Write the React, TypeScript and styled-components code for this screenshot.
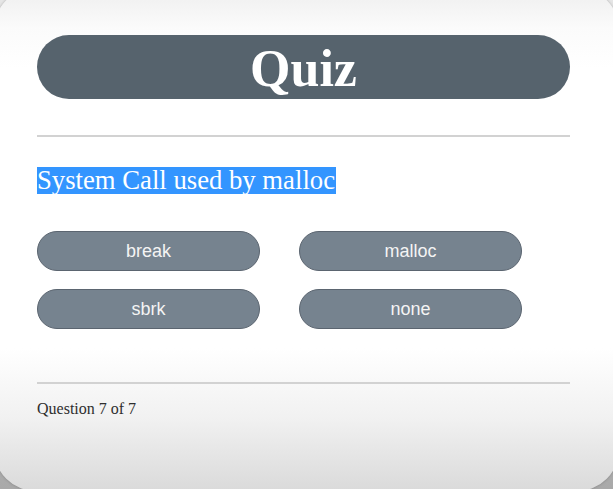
import styled, { createGlobalStyle } from "styled-components";

const GlobalStyle = createGlobalStyle`
  html, body {
    margin: 0;
    padding: 0;
    overflow: hidden;
    background: #b4b4b4;
  }
`;

const Page = styled.div`
  width: 613px;
  height: 489px;
  overflow: hidden;
  background: linear-gradient(#e6e6e6, #a9a9a9);
`;

const Card = styled.div`
  margin: -12px 0 0 -6px;
  width: 625px;
  height: 503px;
  box-sizing: border-box;
  padding: 47px 49px 0 43px;
  border-radius: 42px;
  background: linear-gradient(
    #eeeeee 0px,
    #fbfbfb 40px,
    #ffffff 80px,
    #ffffff 360px,
    #f1f1f1 430px,
    #dadada 503px
  );
  box-shadow: 0 0 3px rgba(0, 0, 0, 0.25);
  display: flex;
  flex-direction: column;
`;

const Header = styled.div`
  height: 64px;
  border-radius: 32px;
  background: #56636d;
  display: flex;
  align-items: center;
  justify-content: center;
`;

const Title = styled.h1`
  margin: 0;
  color: #ffffff;
  font-family: "Liberation Serif", "Times New Roman", serif;
  font-weight: bold;
  font-size: 52px;
  line-height: 1;
  transform: translateY(2px);
`;

const Divider = styled.hr<{ $top: number }>`
  margin: ${(p) => p.$top}px 0 0;
  border: none;
  height: 2px;
  background: #d2d2d2;
`;

const Question = styled.div`
  margin-top: 30px;
  font-family: "Liberation Serif", "Times New Roman", serif;
  font-size: 26.7px;
  line-height: 27px;
  height: 27px;
`;

const Highlight = styled.span`
  display: inline-block;
  background: #3395ff;
  color: #ffffff;
  line-height: 27px;
  height: 27px;
  padding-right: 1px;
`;

const Options = styled.div`
  margin-top: 37px;
  display: grid;
  grid-template-columns: 223px 223px;
  column-gap: 39px;
  row-gap: 18px;
`;

const Option = styled.button`
  height: 40px;
  border-radius: 20px;
  border: 1px solid #5b6570;
  background: #76838f;
  color: #f4f4f4;
  font-family: "Liberation Sans", Arial, sans-serif;
  font-size: 18px;
  padding: 0;
  cursor: pointer;
`;

const Counter = styled.div`
  margin-top: 16px;
  font-family: "Liberation Serif", "Times New Roman", serif;
  font-size: 16px;
  color: #2e2e2e;
`;

const options = ["break", "malloc", "sbrk", "none"];

const App = () => {
  return (
    <Page>
      <GlobalStyle />
      <Card>
        <Header>
          <Title>Quiz</Title>
        </Header>
        <Divider $top={36} />
        <Question>
          <Highlight>System Call used by malloc</Highlight>
        </Question>
        <Options>
          {options.map((o) => (
            <Option key={o}>{o}</Option>
          ))}
        </Options>
        <Divider $top={53} />
        <Counter>Question 7 of 7</Counter>
      </Card>
    </Page>
  );
};

export default App;
